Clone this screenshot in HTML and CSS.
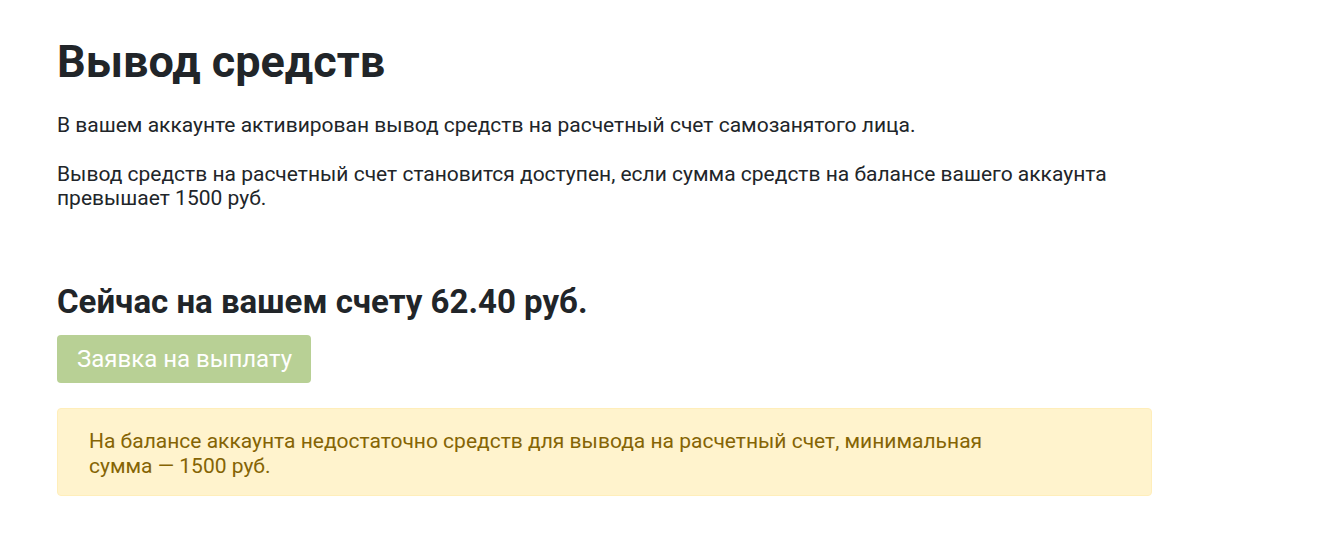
FILE: index.html
```html
<!DOCTYPE html>
<html lang="ru">
<head>
<meta charset="utf-8">
<title>Вывод средств</title>
<link rel="stylesheet" href="styles.css">
</head>
<body>
<main class="page">
  <h1 class="title">Вывод средств</h1>
  <p class="text">В вашем аккаунте активирован вывод средств на расчетный счет самозанятого лица.</p>
  <p class="text">Вывод средств на расчетный счет становится доступен, если сумма средств на балансе вашего аккаунта превышает 1500 руб.</p>
  <h2 class="balance">Сейчас на вашем счету 62.40 руб.</h2>
  <button class="btn-payout" type="button" disabled>Заявка на выплату</button>
  <div class="alert">На балансе аккаунта недостаточно средств для вывода на расчетный счет, минимальная сумма&nbsp;— 1500 руб.</div>
</main>
</body>
</html>
```

FILE: styles.css
```css
html, body {
  margin: 0;
  padding: 0;
  background: #ffffff;
}
body {
  font-family: Roboto, "Liberation Sans", sans-serif;
  color: #212529;
}
.page {
  width: 1095px;
  padding: 35px 0 0 57px;
}
.title {
  margin: 0 0 25px;
  font-size: 45px;
  line-height: 53px;
  font-weight: 700;
}
.text {
  margin: 0 0 25px;
  font-size: 21px;
  line-height: 24px;
}
.balance {
  margin: 75px 0 16px;
  font-size: 33px;
  line-height: 34px;
  font-weight: 700;
}
.btn-payout {
  display: block;
  height: 48px;
  padding: 0 19px 0 20px;
  border: 0;
  border-radius: 4px;
  background: #b8d095;
  color: #ffffff;
  font-family: Roboto, "Liberation Sans", sans-serif;
  font-size: 24px;
  margin: 0 0 25px;
}
.alert {
  box-sizing: border-box;
  height: 88px;
  padding: 20px 120px 20px 31px;
  background: #fff3cd;
  border: 1px solid #ffeeba;
  border-radius: 4px;
  color: #856404;
  font-size: 21px;
  line-height: 25px;
}
```
